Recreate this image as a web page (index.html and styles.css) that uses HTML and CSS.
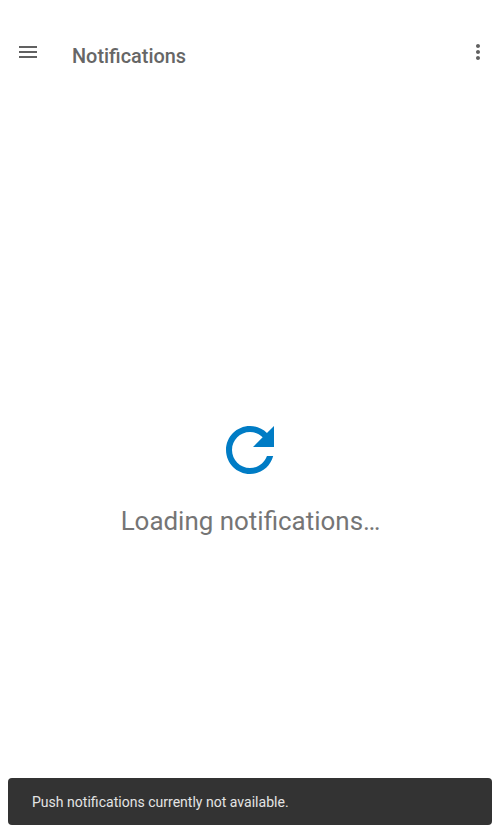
FILE: index.html
```html
<!DOCTYPE html>
<html lang="en">
<head>
<meta charset="utf-8">
<meta name="viewport" content="width=device-width">
<title>Notifications</title>
<link rel="stylesheet" href="styles.css">
</head>
<body>
<header class="toolbar">
  <svg class="icon" viewBox="0 0 24 24"><path d="M3 18h18v-2H3v2zm0-5h18v-2H3v2zm0-7v2h18V6H3z"/></svg>
  <h1 class="title">Notifications</h1>
  <svg class="icon" viewBox="0 0 24 24"><path d="M12 8c1.1 0 2-.9 2-2s-.9-2-2-2-2 .9-2 2 .9 2 2 2zm0 2c-1.1 0-2 .9-2 2s.9 2 2 2 2-.9 2-2-.9-2-2-2zm0 6c-1.1 0-2 .9-2 2s.9 2 2 2 2-.9 2-2-.9-2-2-2z"/></svg>
</header>
<main class="loading">
  <svg class="refresh" viewBox="0 0 24 24"><path d="M17.65 6.35C16.2 4.9 14.21 4 12 4c-4.42 0-7.99 3.58-7.99 8s3.57 8 7.99 8c3.73 0 6.84-2.55 7.73-6h-2.08c-.82 2.33-3.04 4-5.65 4-3.31 0-6-2.69-6-6s2.69-6 6-6c1.66 0 3.14.69 4.22 1.78L13 11h7V4l-2.35 2.35z"/></svg>
  <p class="message">Loading notifications…</p>
</main>
<div class="snackbar" role="status">Push notifications currently not available.</div>
</body>
</html>
```

FILE: styles.css
```css
* { box-sizing: border-box; }
body {
  margin: 0;
  height: 100vh;
  display: flex;
  flex-direction: column;
  overflow: hidden;
  background: #fff;
  font-family: Roboto, sans-serif;
}
.toolbar {
  display: flex;
  height: 80px;
  padding: 40px 10px 0 16px;
}
.icon {
  width: 24px;
  height: 24px;
  fill: #616161;
}
.title {
  flex: 1;
  margin: 5px 0 0 32px;
  font-size: 19.9px;
  line-height: 24px;
  font-weight: 500;
  color: #666;
}
.loading {
  flex: 1;
  display: flex;
  flex-direction: column;
  align-items: center;
  padding-top: 334px;
}
.refresh {
  width: 72px;
  height: 72px;
  fill: #007cc5;
}
.message {
  margin: 19px 0 0 1px;
  font-size: 25.95px;
  line-height: 32px;
  color: #757575;
}
.snackbar {
  height: 47px;
  margin: 0 8px 8px;
  padding: 0 24px;
  border-radius: 4px;
  background: #333;
  color: #e4e4e4;
  font-size: 14.05px;
  line-height: 48px;
}
```
